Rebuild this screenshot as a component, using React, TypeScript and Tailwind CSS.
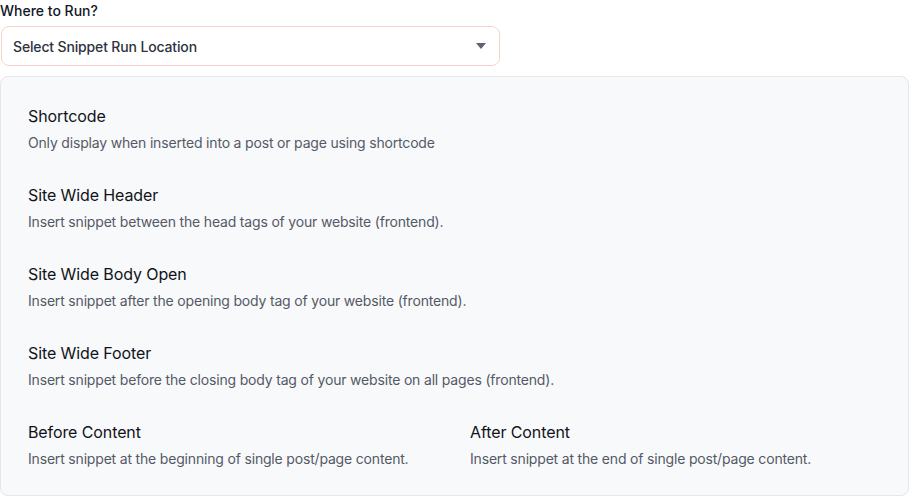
import React from "react";

const items = [
  { t: "Shortcode", d: "Only display when inserted into a post or page using shortcode", full: true },
  { t: "Site Wide Header", d: "Insert snippet between the head tags of your website (frontend).", full: true },
  { t: "Site Wide Body Open", d: "Insert snippet after the opening body tag of your website (frontend).", full: true },
  { t: "Site Wide Footer", d: "Insert snippet before the closing body tag of your website on all pages (frontend).", full: true },
  { t: "Before Content", d: "Insert snippet at the beginning of single post/page content.", full: false },
  { t: "After Content", d: "Insert snippet at the end of single post/page content.", full: false },
];

export default function App() {
  return (
    <div className="w-[909px] h-[498px] bg-white" style={{ fontFamily: "Inter, 'Liberation Sans', sans-serif" }}>
      <div className="pt-[2px] text-[14px] leading-[17px] font-medium text-[#111827]">Where to Run?</div>
      <div className="mt-[7px] ml-px w-[499px] h-[40px] rounded-[8px] border border-[#f7d4cb] flex items-center justify-between pl-[11px] pr-[12px] text-[14px] font-medium tracking-[-0.15px] text-[#2d3340]">
        <span>Select Snippet Run Location</span>
        <svg width="10" height="6" viewBox="0 0 10 6" className="mr-[1px]">
          <path d="M0 0 H10 L5 6 Z" fill="#5f6270" />
        </svg>
      </div>
      <div className="mt-[10px] w-[909px] h-[420px] rounded-[8px] border border-[#e5e7eb] bg-[#f8f9fb] px-[27px] pt-[27px] grid grid-cols-2 gap-x-[31px] gap-y-[30px] content-start">
        {items.map((it) => (
          <div key={it.t} className={it.full ? "col-span-2" : ""}>
            <div className="text-[16px] leading-[24px] font-normal tracking-[-0.1px] text-[#111318]">{it.t}</div>
            <div className="mt-[5px] text-[14px] leading-[20px] tracking-[-0.18px] text-[#545966]">{it.d}</div>
          </div>
        ))}
      </div>
    </div>
  );
}
